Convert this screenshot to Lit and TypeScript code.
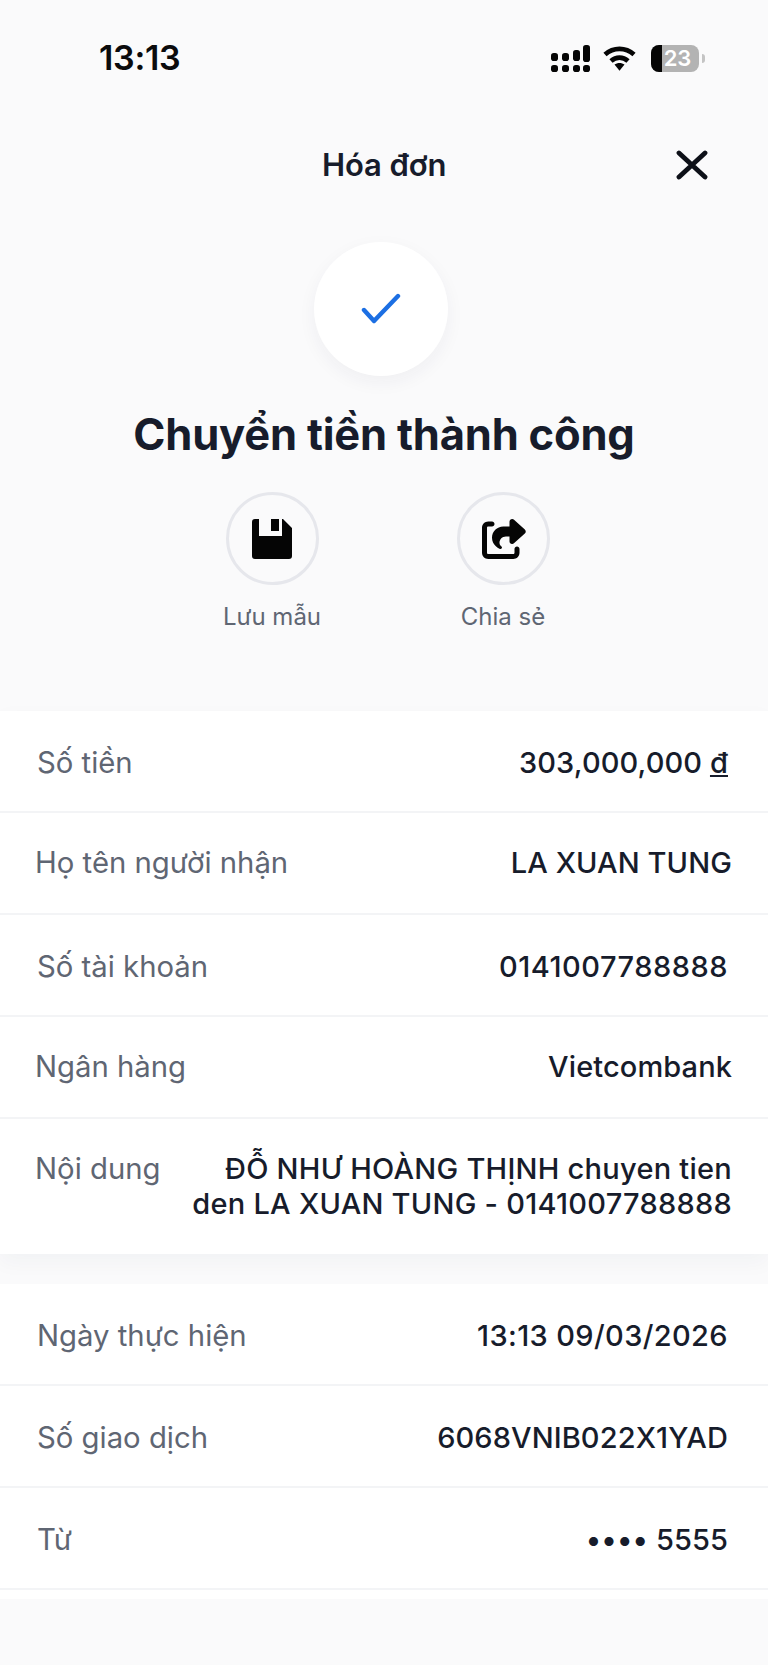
import { LitElement, html, css, svg } from "lit";
import { customElement } from "lit/decorators.js";

type Row = { label: string; value: unknown; alt?: boolean; multi?: boolean; spread?: string };

const firstRows: Row[] = [
  { label: "Số tiền", value: html`303,000,000 <span class="dong">đ</span>` },
  { label: "Họ tên người nhận", value: "LA XUAN TUNG", alt: true },
  { label: "Số tài khoản", value: "0141007788888", spread: "acct" },
  { label: "Ngân hàng", value: "Vietcombank", alt: true },
  {
    label: "Nội dung",
    value: html`ĐỖ NHƯ HOÀNG THỊNH chuyen tien<br />den LA XUAN TUNG - 0141007788888`,
    alt: true,
    multi: true,
    spread: "memo",
  },
];
const secondRows: Row[] = [
  { label: "Ngày thực hiện", value: "13:13 09/03/2026", spread: "date" },
  { label: "Số giao dịch", value: "6068VNIB022X1YAD" },
  { label: "Từ", value: "•••• 5555" },
];

const signal = [
  [0, 8, 7, 8], [11, 8, 7, 8], [22, 5, 7, 11], [32, 0, 7, 17],
  [0, 20, 7, 7], [11, 20, 7, 7], [22, 20, 7, 7], [32, 20, 7, 7],
];

@customElement("app-root")
export class AppRoot extends LitElement {
  static styles = css`
    :host {
      display: block;
      width: 768px;
      height: 1665px;
      overflow: hidden;
      background: #fafafb;
      font-family: Inter, "Noto Sans", sans-serif;
      color: #171c2b;
    }
    .status {
      display: flex;
      align-items: center;
      height: 46px;
      padding: 35px 0 0 99px;
    }
    .time {
      font-size: 34px;
      font-weight: 600;
      color: #0b0b0d;
      line-height: 46px;
      width: 452px;
      letter-spacing: -0.3px;
    }
    .signal { width: 39px; height: 27px; margin-right: 13px; }
    .wifi { width: 33px; height: 25px; margin-right: 15px; }
    .battery {
      display: flex;
      width: 48px;
      height: 27px;
      border-radius: 8px;
      overflow: hidden;
      background: #b3b3b3;
    }
    .battery-fill { width: 11px; background: #050505; }
    .battery-text {
      flex: 1;
      text-align: center;
      color: #fff;
      font-size: 22px;
      font-weight: 600;
      line-height: 27px;
      padding-right: 6px;
    }
    .nub {
      width: 3px;
      height: 9px;
      margin-left: 3px;
      border-radius: 0 3px 3px 0;
      background: #c4c4c4;
    }
    .header {
      display: flex;
      align-items: center;
      height: 44px;
      margin-top: 62px;
      padding-left: 322px;
    }
    .title {
      width: 354px;
      font-size: 31px;
      font-weight: 600;
      line-height: 44px;
      letter-spacing: -0.1px;
    }
    .close { width: 32px; height: 30px; }
    .hero {
      display: flex;
      flex-direction: column;
      align-items: center;
      height: 524px;
    }
    .check-circle {
      display: flex;
      align-items: center;
      justify-content: center;
      width: 134px;
      height: 134px;
      margin: 55px 0 0 -7px;
      border-radius: 50%;
      background: #fff;
      box-shadow: 0 6px 18px rgba(30, 40, 70, 0.05);
    }
    .check-circle svg { width: 40px; height: 32px; }
    .headline {
      margin: 27px 0 0;
      font-size: 43.5px;
      font-weight: 700;
      line-height: 62px;
      letter-spacing: -0.2px;
      white-space: nowrap;
    }
    .actions {
      display: flex;
      gap: 138px;
      margin: 27px 0 0 7px;
    }
    .action {
      display: flex;
      flex-direction: column;
      align-items: center;
      gap: 16px;
      width: 93px;
    }
    .ring {
      display: flex;
      align-items: center;
      justify-content: center;
      box-sizing: border-box;
      width: 93px;
      height: 93px;
      border: 3px solid #e6e7ec;
      border-radius: 50%;
    }
    .ring svg { display: block; }
    .ring .share { margin-left: 3px; }
    .label-small {
      font-size: 24px;
      line-height: 32px;
      color: #5f6673;
      white-space: nowrap;
    }
    .card { background: #fff; }
    .first { box-shadow: 0 8px 20px rgba(30, 40, 70, 0.04); }
    .second { margin-top: 30px; padding-bottom: 9px; }
    .row {
      display: flex;
      justify-content: space-between;
      align-items: center;
      box-sizing: border-box;
      height: 102px;
      padding: 2px 40px 0 37px;
      border-bottom: 2px solid #f3f4f6;
      font-size: 29px;
      line-height: 35px;
    }
    .row.alt { padding: 0 36px 2px 35px; }
    .row.multi {
      align-items: flex-start;
      height: 135px;
      padding-top: 32px;
      border-bottom: none;
    }
    .key { color: #5f6673; white-space: nowrap; font-size: 29.3px; }
    .val {
      font-weight: 500;
      text-align: right;
      white-space: nowrap;
      letter-spacing: 0.1px;
    }
    .val.acct { letter-spacing: 0.5px; }
    .val.date { letter-spacing: 0.37px; }
    .val.memo { letter-spacing: 0.25px; }
    .dong { text-decoration: underline; }
  `;

  private renderRow(r: Row) {
    const cls = `row${r.alt ? " alt" : ""}${r.multi ? " multi" : ""}`;
    return html`<div class=${cls}>
      <span class="key">${r.label}</span><span class="val ${r.spread ?? ""}">${r.value}</span>
    </div>`;
  }

  render() {
    return html`
      <div class="status">
        <span class="time">13:13</span>
        <svg class="signal" viewBox="0 0 39 27">
          ${signal.map(
            ([x, y, w, h]) =>
              svg`<rect x=${x} y=${y} width=${w} height=${h} rx="2.8" fill="#050505"></rect>`
          )}
        </svg>
        <svg class="wifi" viewBox="0 0 33 25" fill="none" stroke="#050505" stroke-width="4.8">
          <path d="M2 8.5C10.5 1 22.5 1 31 8.5"></path>
          <path d="M8 15C13 10.6 20 10.6 25 15"></path>
          <path d="M11.5 18.6L16.5 24.8L21.5 18.6C18.6 16.4 14.4 16.4 11.5 18.6Z" fill="#050505" stroke="none"></path>
        </svg>
        <div class="battery">
          <div class="battery-fill"></div>
          <div class="battery-text">23</div>
        </div>
        <div class="nub"></div>
      </div>

      <div class="header">
        <span class="title">Hóa đơn</span>
        <svg class="close" viewBox="0 0 32 30" fill="none" stroke="#0d1018" stroke-width="4.8" stroke-linecap="round">
          <path d="M3 3L29 27M29 3L3 27"></path>
        </svg>
      </div>

      <div class="hero">
        <div class="check-circle">
          <svg viewBox="0 0 40 32" fill="none" stroke="#1c6fe3" stroke-width="4.4" stroke-linecap="round" stroke-linejoin="round">
            <path d="M3 17L13 28L37 3"></path>
          </svg>
        </div>
        <h1 class="headline">Chuyển tiền thành công</h1>
        <div class="actions">
          <div class="action">
            <div class="ring">
              <svg width="40" height="40" viewBox="0 0 40 40">
                <path
                  fill-rule="evenodd"
                  fill="#050505"
                  d="M3 0H31L40 9V37A3 3 0 0 1 37 40H3A3 3 0 0 1 0 37V3A3 3 0 0 1 3 0ZM7 0V17H30V0H27V12H19V0Z"
                ></path>
              </svg>
            </div>
            <span class="label-small">Lưu mẫu</span>
          </div>
          <div class="action">
            <div class="ring">
              <svg class="share" width="45" height="40" viewBox="0 0 576 512">
                <path
                  fill="#050505"
                  d="M352 224H305.5c-45 0-81.5 36.5-81.5 81.5c0 22.3 10.3 34.3 19.2 40.5c6.8 4.7 12.8 12 12.8 20.3c0 9.8-8 17.8-17.8 17.8h-2.5c-2.4 0-4.8-.4-7.1-1.4C210.8 374.8 128 333.4 128 240c0-79.5 64.5-144 144-144h80V34.7C352 15.5 367.5 0 386.7 0c8.6 0 16.8 3.2 23.2 8.9L548.1 133.3c7.6 6.8 11.9 16.5 11.9 26.7s-4.3 19.9-11.9 26.7l-139 125.1c-5.9 5.3-13.5 8.2-21.4 8.2H384c-17.7 0-32-14.3-32-32V224zM80 96c-8.8 0-16 7.2-16 16V432c0 8.8 7.2 16 16 16H400c8.8 0 16-7.2 16-16V384c0-17.7 14.3-32 32-32s32 14.3 32 32v48c0 44.2-35.8 80-80 80H80c-44.2 0-80-35.8-80-80V112C0 67.8 35.8 32 80 32h48c17.7 0 32 14.3 32 32s-14.3 32-32 32H80z"
                ></path>
              </svg>
            </div>
            <span class="label-small">Chia sẻ</span>
          </div>
        </div>
      </div>

      <div class="card first">${firstRows.map((r) => this.renderRow(r))}</div>
      <div class="card second">${secondRows.map((r) => this.renderRow(r))}</div>
    `;
  }
}
